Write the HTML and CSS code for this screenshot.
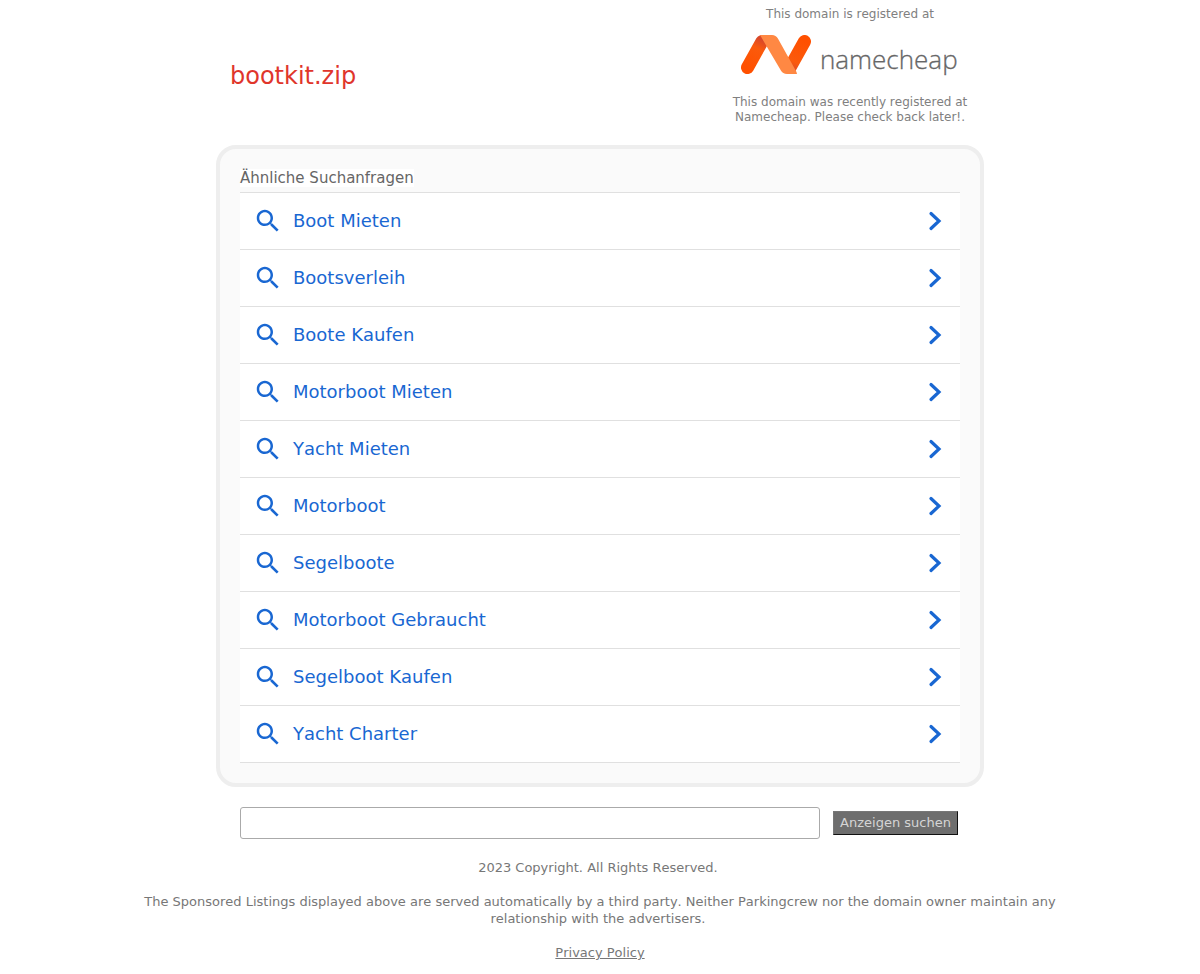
FILE: index.html
```html
<!DOCTYPE html>
<html>
<head>
    <meta charset="UTF-8">
    <title>bootkit.zip</title>
    <link rel="stylesheet" href="styles.css">
</head>
<body>
<svg class="defs" width="0" height="0">
    <defs>
        <symbol id="icon-search" viewBox="0 0 24 24">
            <path d="M15.5 14h-.79l-.28-.27C15.41 12.59 16 11.11 16 9.5 16 5.91 13.09 3 9.5 3S3 5.91 3 9.5 5.91 16 9.5 16c1.61 0 3.09-.59 4.23-1.57l.27.28v.79l5 4.99L20.49 19l-4.99-5zm-6 0C7.01 14 5 11.99 5 9.5S7.01 5 9.5 5 14 7.01 14 9.5 11.99 14 9.5 14z"/>
        </symbol>
        <symbol id="icon-arrow" viewBox="0 0 16 24">
            <polyline points="4,4.500 12,12 4,19.500"/>
        </symbol>
        <linearGradient id="leg-left" gradientUnits="userSpaceOnUse" x1="6" y1="33" x2="21" y2="5">
            <stop offset="0" stop-color="#ff5000"/>
            <stop offset="0.7" stop-color="#fb5a0c"/>
            <stop offset="1" stop-color="#d8482a"/>
        </linearGradient>
        <linearGradient id="leg-right" gradientUnits="userSpaceOnUse" x1="63" y1="6" x2="48" y2="35">
            <stop offset="0" stop-color="#ff5000"/>
            <stop offset="0.7" stop-color="#fb5a0c"/>
            <stop offset="1" stop-color="#d8482a"/>
        </linearGradient>
    </defs>
</svg>

<div class="header">
    <div class="domain">bootkit.zip</div>
    <div class="registrar">
        <p>This domain is registered at</p>
        <div class="logo">
            <svg class="logo-mark" width="70" height="40" viewBox="0 0 70 40">
                <line x1="6.5" y1="32.500" x2="21" y2="6.500" stroke="url(#leg-left)" stroke-width="13" stroke-linecap="round"/>
                <line x1="63.500" y1="6.500" x2="49" y2="32.500" stroke="url(#leg-right)" stroke-width="13" stroke-linecap="round"/>
                <path d="M21 0h10c2.600 0 4.600 1.200 5.900 3.500L55 36c.5 1 .9 2 1 3H46c-2.800 0-4.800-1.200-6.100-3.500L19 0z" fill="#ff8843"/>
            </svg>
            <span class="logo-name">namecheap</span>
        </div>
        <p>This domain was recently registered at Namecheap. Please check back later!.</p>
    </div>
</div>

<div class="panel">
    <div class="panel-title"><span>Ähnliche Suchanfragen</span></div>
    <ul class="results">
        <li><a href="javascript:;"><svg class="search-icon"><use href="#icon-search"/></svg><span class="label">Boot Mieten</span><svg class="arrow-icon"><use href="#icon-arrow"/></svg></a></li>
        <li><a href="javascript:;"><svg class="search-icon"><use href="#icon-search"/></svg><span class="label">Bootsverleih</span><svg class="arrow-icon"><use href="#icon-arrow"/></svg></a></li>
        <li><a href="javascript:;"><svg class="search-icon"><use href="#icon-search"/></svg><span class="label">Boote Kaufen</span><svg class="arrow-icon"><use href="#icon-arrow"/></svg></a></li>
        <li><a href="javascript:;"><svg class="search-icon"><use href="#icon-search"/></svg><span class="label">Motorboot Mieten</span><svg class="arrow-icon"><use href="#icon-arrow"/></svg></a></li>
        <li><a href="javascript:;"><svg class="search-icon"><use href="#icon-search"/></svg><span class="label">Yacht Mieten</span><svg class="arrow-icon"><use href="#icon-arrow"/></svg></a></li>
        <li><a href="javascript:;"><svg class="search-icon"><use href="#icon-search"/></svg><span class="label">Motorboot</span><svg class="arrow-icon"><use href="#icon-arrow"/></svg></a></li>
        <li><a href="javascript:;"><svg class="search-icon"><use href="#icon-search"/></svg><span class="label">Segelboote</span><svg class="arrow-icon"><use href="#icon-arrow"/></svg></a></li>
        <li><a href="javascript:;"><svg class="search-icon"><use href="#icon-search"/></svg><span class="label">Motorboot Gebraucht</span><svg class="arrow-icon"><use href="#icon-arrow"/></svg></a></li>
        <li><a href="javascript:;"><svg class="search-icon"><use href="#icon-search"/></svg><span class="label">Segelboot Kaufen</span><svg class="arrow-icon"><use href="#icon-arrow"/></svg></a></li>
        <li><a href="javascript:;"><svg class="search-icon"><use href="#icon-search"/></svg><span class="label">Yacht Charter</span><svg class="arrow-icon"><use href="#icon-arrow"/></svg></a></li>
    </ul>
</div>

<form class="search" onsubmit="return false;">
    <input type="text" class="search-input"/>
    <button type="submit" class="search-btn">Anzeigen suchen</button>
</form>

<div class="footer">
    <p>2023 Copyright. All Rights Reserved.&nbsp;</p>
    <p>The Sponsored Listings displayed above are served automatically by a third party. Neither Parkingcrew nor the domain owner maintain any relationship with the advertisers.&nbsp;</p>
    <p><a href="javascript:;">Privacy Policy</a></p>
</div>
</body>
</html>
```

FILE: styles.css
```css
html, body, div, ul, li, p, a, input, button {
    margin: 0;
    padding: 0;
}

body {
    background: #fff;
    font-family: "DejaVu Sans", sans-serif;
    font-kerning: none;
    color: #777;
}

ul, li {
    list-style: none;
}

a {
    text-decoration: none;
}

.defs {
    display: block;
    height: 0;
}

.header {
    display: flex;
    justify-content: space-between;
    align-items: center;
    box-sizing: border-box;
    margin: 0 auto;
    padding: 0 9px 0 14px;
    width: 768px;
    height: 145px;
}

.domain {
    margin-top: 6px;
    font-size: 24px;
    color: #e0352b;
}

.registrar {
    padding-top: 7px;
    width: 250px;
    height: 145px;
    box-sizing: border-box;
    font-size: 12px;
    line-height: 15px;
    text-align: center;
    color: #808080;
}

.logo {
    display: flex;
    align-items: center;
    gap: 9px;
    margin: 13px 0 20px 16px;
    height: 40px;
}

.logo-mark {
    flex: none;
}

.logo-name {
    margin-top: 7px;
    font-family: "Open Sans", sans-serif;
    font-weight: 300;
    font-size: 26px;
    line-height: 40px;
    color: #666;
    -webkit-text-stroke: 0.3px #666;
}

.panel {
    box-sizing: border-box;
    margin: 0 auto;
    padding: 20px;
    width: 768px;
    height: 642px;
    border: 4px solid #eee;
    border-radius: 20px;
    background: #fafafa;
}

.panel-title {
    height: 23px;
    font-size: 15px;
    line-height: 18px;
    color: #666;
}

.panel-title span {
    display: inline-block;
    background: #fff;
}

.results {
    border-top: 1px solid #e0e0e0;
    background: #fff;
}

.results li {
    height: 56px;
    border-bottom: 1px solid #e0e0e0;
}

.results a {
    display: flex;
    align-items: center;
    height: 100%;
    padding: 0 17px 0 13px;
    font-size: 18px;
    color: #1967d2;
}

.search-icon {
    flex: none;
    width: 30px;
    height: 30px;
    fill: #1967d2;
}

.label {
    flex: 1;
    margin: 0 0 2px 10px;
}

.arrow-icon {
    flex: none;
    width: 16px;
    height: 24px;
    fill: none;
    stroke: #1967d2;
    stroke-width: 3.2;
    stroke-linecap: round;
    stroke-linejoin: miter;
}

.search {
    display: flex;
    align-items: center;
    margin: 20px auto 0;
    padding-left: 24px;
    box-sizing: border-box;
    width: 768px;
}

.search-input {
    box-sizing: border-box;
    width: 580px;
    height: 32px;
    border: 1px solid #aaa;
    border-radius: 3px;
    background: #fff;
    outline: none;
}

.search-btn {
    box-sizing: border-box;
    margin-left: 13px;
    padding-bottom: 2px;
    width: 125px;
    height: 24px;
    border: 1px solid;
    border-color: #777 #111 #111 #777;
    background: #6e6e6e;
    font-family: "DejaVu Sans", sans-serif;
    font-kerning: none;
    font-size: 13px;
    color: #d5d5d5;
}

.footer {
    margin: 20px auto 0;
    width: 960px;
    font-size: 13px;
    line-height: 17px;
    text-align: center;
    color: #777;
}

.footer p {
    margin-bottom: 17px;
}

.footer a {
    color: #777;
    text-decoration: underline;
}
```
